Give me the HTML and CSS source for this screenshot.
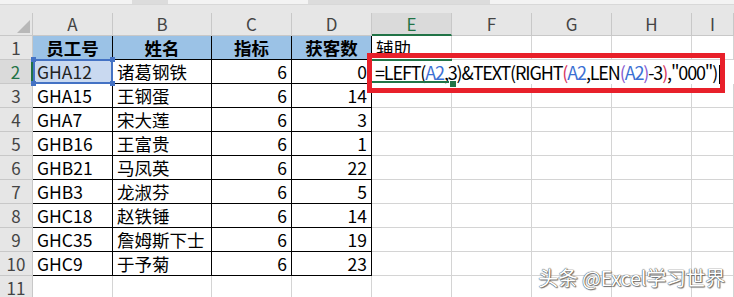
FILE: index.html
```html
<!DOCTYPE html>
<html lang="zh-CN">
<head>
    <meta charset="UTF-8" />
    <meta name="viewport" content="width=device-width, initial-scale=1" />
    <title>辅助列公式</title>
    <link rel="stylesheet" href="styles.css">
</head>
<body>
    <div class="topbar">
        <div class="strip">
            <span class="seg light" style="width: 132px;"></span>
            <span class="seg dark" style="width: 36px;"></span>
            <span class="seg light" style="width: 140px;"></span>
            <span class="seg dark" style="width: 182px;"></span>
            <span class="seg light" style="flex: 1;"></span>
        </div>
    </div>

    <div class="sheet">
        <!-- column headers -->
        <div class="c hd corner">
            <svg width="14" height="14" viewBox="0 0 14 14"><polygon points="13,0 13,13 0,13" fill="#b8b8b8"/></svg>
        </div>
        <div class="c hd">A</div>
        <div class="c hd">B</div>
        <div class="c hd">C</div>
        <div class="c hd">D</div>
        <div class="c hd active">E</div>
        <div class="c hd">F</div>
        <div class="c hd">G</div>
        <div class="c hd">H</div>
        <div class="c hd">I</div>

        <!-- row 1 -->
        <div class="c rh">1</div>
        <div class="c t th">员工号</div>
        <div class="c t th">姓名</div>
        <div class="c t th">指标</div>
        <div class="c t th">获客数</div>
        <div class="c">辅助</div>
        <div class="c"></div>
        <div class="c"></div>
        <div class="c"></div>
        <div class="c"></div>

        <!-- row 2 -->
        <div class="c rh active">2</div>
        <div class="c t ref">GHA12
            <span class="knob tl"></span><span class="knob tr"></span>
            <span class="knob bl"></span><span class="knob br"></span>
        </div>
        <div class="c t">诸葛钢铁</div>
        <div class="c t n">6</div>
        <div class="c t n">0</div>
        <div class="c edit">
            <span class="fx">=LEFT(<span class="r1">A2</span>,3)&amp;TEXT(RIGHT<span class="p1">(</span><span class="r1">A2</span>,LEN<span class="p2">(</span><span class="r1">A2</span><span class="p2">)</span>-3<span class="p1">)</span>,"000")</span><span class="caret"></span>
            <span class="handle"></span>
        </div>

        <!-- rows 3-10 -->
        <div class="c rh">3</div>
        <div class="c t">GHA15</div><div class="c t">王钢蛋</div><div class="c t n">6</div><div class="c t n">14</div>
        <div class="c"></div><div class="c"></div><div class="c"></div><div class="c"></div><div class="c"></div>

        <div class="c rh">4</div>
        <div class="c t">GHA7</div><div class="c t">宋大莲</div><div class="c t n">6</div><div class="c t n">3</div>
        <div class="c"></div><div class="c"></div><div class="c"></div><div class="c"></div><div class="c"></div>

        <div class="c rh">5</div>
        <div class="c t">GHB16</div><div class="c t">王富贵</div><div class="c t n">6</div><div class="c t n">1</div>
        <div class="c"></div><div class="c"></div><div class="c"></div><div class="c"></div><div class="c"></div>

        <div class="c rh">6</div>
        <div class="c t">GHB21</div><div class="c t">马凤英</div><div class="c t n">6</div><div class="c t n">22</div>
        <div class="c"></div><div class="c"></div><div class="c"></div><div class="c"></div><div class="c"></div>

        <div class="c rh">7</div>
        <div class="c t">GHB3</div><div class="c t">龙淑芬</div><div class="c t n">6</div><div class="c t n">5</div>
        <div class="c"></div><div class="c"></div><div class="c"></div><div class="c"></div><div class="c"></div>

        <div class="c rh">8</div>
        <div class="c t">GHC18</div><div class="c t">赵铁锤</div><div class="c t n">6</div><div class="c t n">14</div>
        <div class="c"></div><div class="c"></div><div class="c"></div><div class="c"></div><div class="c"></div>

        <div class="c rh">9</div>
        <div class="c t">GHC35</div><div class="c t">詹姆斯下士</div><div class="c t n">6</div><div class="c t n">19</div>
        <div class="c"></div><div class="c"></div><div class="c"></div><div class="c"></div><div class="c"></div>

        <div class="c rh">10</div>
        <div class="c t">GHC9</div><div class="c t">于予菊</div><div class="c t n">6</div><div class="c t n">23</div>
        <div class="c"></div><div class="c"></div><div class="c"></div><div class="c"></div><div class="c"></div>

        <!-- row 11 -->
        <div class="c rh">11</div>
        <div class="c"></div><div class="c"></div><div class="c"></div><div class="c"></div>
        <div class="c"></div><div class="c"></div><div class="c"></div><div class="c"></div><div class="c"></div>
    </div>

    <div class="callout"></div>
    <div class="watermark">头条 @Excel学习世界</div>
</body>
</html>
```

FILE: styles.css
```css
body {
    margin: 0;
    width: 734px;
    height: 297px;
    overflow: hidden;
    position: relative;
    background-color: #fff;
    font-family: "Noto Sans CJK SC", "Liberation Sans", sans-serif;
    font-size: 17.5px;
    color: #000;
}
.topbar {
    height: 13px;
    background-color: #e6e6e6;
}
.strip {
    display: flex;
    height: 4px;
    border-bottom: 1px solid #d8d8d8;
}
.seg.light {
    background-color: #f3f3f3;
}
.seg.dark {
    background-color: #dcdcdc;
}
.sheet {
    display: grid;
    grid-template-columns: 33px 80px 99px 80px 80px 80px 80px 80px 80px 42px;
    grid-template-rows: 23px repeat(11, 24px);
}
.c {
    box-sizing: border-box;
    border-right: 1px solid #d4d4d4;
    border-bottom: 1px solid #d4d4d4;
    padding: 0 4px;
    line-height: 23px;
    white-space: nowrap;
}
.c.hd {
    background-color: #e6e6e6;
    border-right-color: #c8c8c8;
    border-bottom-color: #c8c8c8;
    text-align: center;
    color: #444;
    font-size: 17px;
    line-height: 22px;
}
.c.corner {
    position: relative;
}
.corner svg {
    position: absolute;
    left: 17px;
    top: 7px;
}
.c.rh {
    background-color: #e6e6e6;
    border-right-color: #c8c8c8;
    border-bottom-color: #c8c8c8;
    text-align: center;
    color: #444;
    font-size: 17px;
    padding: 0;
}
.c.hd.active {
    background-color: #dadada;
    color: #217346;
    border-bottom: 2px solid #217346;
}
.c.rh.active {
    background-color: #dadada;
    color: #217346;
    border-right: 2px solid #217346;
}
.c.t {
    border-right-color: #000;
    border-bottom-color: #000;
}
.c.th {
    background-color: #9bc2e6;
    font-weight: bold;
    text-align: center;
}
.c.n {
    text-align: right;
}
.c.ref {
    position: relative;
    background-color: #c9d9f0;
    color: #222;
}
.c.ref::before {
    content: "";
    position: absolute;
    left: 0;
    top: -1px;
    right: -1px;
    bottom: -1px;
    border: 2px solid #4472c4;
}
.knob {
    position: absolute;
    width: 5px;
    height: 5px;
    background-color: #4472c4;
}
.knob.tl { left: -2px; top: -3px; }
.knob.tr { right: -3px; top: -3px; }
.knob.bl { left: -2px; bottom: -3px; }
.knob.br { right: -3px; bottom: -3px; }
.c.edit {
    grid-column: span 5;
    position: relative;
    border: none;
    padding: 0 3px;
    background-color: #fff;
    line-height: 24px;
}
.c.edit::before {
    content: "";
    position: absolute;
    left: 0;
    top: -1px;
    width: 80px;
    height: 24px;
    border-top: 2px solid #217346;
    border-bottom: 2px solid #217346;
    box-sizing: border-box;
}
.handle {
    position: absolute;
    left: 77px;
    top: 20px;
    width: 6px;
    height: 6px;
    background-color: #217346;
    border: 1px solid #fff;
}
.fx {
    font-size: 18px;
    letter-spacing: -1.15px;
}
.fx .r1 {
    color: #3b6fd3;
}
.fx .p1 {
    color: #d8365f;
}
.fx .p2 {
    color: #8b5bd0;
}
.caret {
    display: inline-block;
    width: 1px;
    height: 19px;
    background-color: #000;
    vertical-align: -4px;
    margin-left: 2px;
}
.callout {
    position: absolute;
    left: 367px;
    top: 53px;
    width: 358px;
    height: 40px;
    box-sizing: border-box;
    border: 5px solid #e8202a;
}
.watermark {
    position: absolute;
    right: 9px;
    top: 263px;
    font-size: 20px;
    color: #fff;
    letter-spacing: -0.3px;
    text-shadow: 0 0 1px #444, 0 0 1px #444, 1px 1px 1px #777;
}
```
